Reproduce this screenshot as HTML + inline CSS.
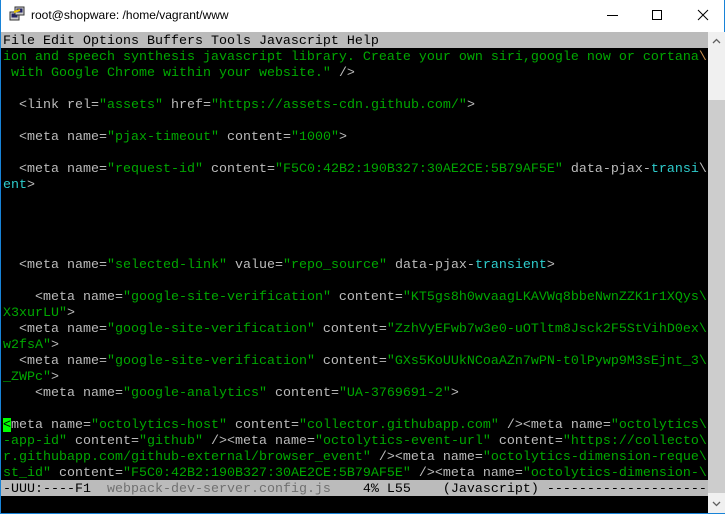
<!DOCTYPE html>
<html><head><meta charset="utf-8"><style>
*{margin:0;padding:0;box-sizing:border-box}
html,body{width:725px;height:514px;overflow:hidden;background:#fff}
#win{position:absolute;left:0;top:0;width:725px;height:514px;border:1px solid #1883d7;border-top:none;background:#fff}
#title{position:absolute;left:0;top:0;width:723px;height:31px;background:#fff;font-family:"Liberation Sans",sans-serif;font-size:12px;color:#000}
#title .t{position:absolute;left:30px;top:8px}
#term{position:absolute;left:0;top:32px;width:707px;height:481px;background:#000;overflow:hidden}
.r{height:16px;line-height:19px;white-space:pre;font-family:"Liberation Mono",monospace;font-size:13.33px;color:#bbb;padding-left:2px;overflow:hidden}
.g{color:#00a800}.c{color:#2ecccc}.k{color:#000}.bg{background:#bbb;color:#000}
.d{color:#707070}
#sb{position:absolute;left:707px;top:32px;width:17px;height:481px;background:#f0f0f0}
#thumb{position:absolute;left:0;top:68px;width:17px;height:393px;background:#cdcdcd}
</style></head><body><div id="win">
<div id="title">
<svg style="position:absolute;left:8px;top:6px" width="16" height="16" viewBox="0 0 16 16"><rect x="1" y="6" width="9" height="8" fill="#ccc" stroke="#333"/><rect x="2.5" y="7.5" width="6" height="4" fill="#226"/><rect x="6" y="1" width="9" height="8" fill="#ccc" stroke="#333"/><rect x="7.5" y="2.5" width="6" height="4" fill="#226"/><path d="M5 6 L11 4" stroke="#e6c200" stroke-width="2"/></svg>
<span class="t">root@shopware: /home/vagrant/www</span>
<svg style="position:absolute;left:600px;top:8px" width="120" height="16"><path d="M6 7.5h11" stroke="#000"/><rect x="51.5" y="2.5" width="9" height="9" fill="none" stroke="#000"/><path d="M97 2l10 10M107 2l-10 10" stroke="#000"/></svg>
</div>
<div id="term">
<div class="r bg">File Edit Options Buffers Tools Javascript Help                                          </div>
<div class="r g">ion and speech synthesis javascript library. Create your own siri,google now or cortana<span style="color:#c89050">\</span></div>
<div class="r g"> with Google Chrome within your website." <span style="color:#bbb">/&gt;</span></div>
<div class="r"> </div>
<div class="r">  &lt;link rel=<span class="g">"assets"</span> href=<span class="g">"https://assets-cdn.github.com/"</span>&gt;</div>
<div class="r"> </div>
<div class="r">  &lt;meta name=<span class="g">"pjax-timeout"</span> content=<span class="g">"1000"</span>&gt;</div>
<div class="r"> </div>
<div class="r">  &lt;meta name=<span class="g">"request-id"</span> content=<span class="g">"F5C0:42B2:190B327:30AE2CE:5B79AF5E"</span> data-pjax-<span class="c">transi</span>\</div>
<div class="r"><span class="c">ent</span>&gt;</div>
<div class="r"> </div><div class="r"> </div><div class="r"> </div><div class="r"> </div>
<div class="r">  &lt;meta name=<span class="g">"selected-link"</span> value=<span class="g">"repo_source"</span> data-pjax-<span class="c">transient</span>&gt;</div>
<div class="r"> </div>
<div class="r">    &lt;meta name=<span class="g">"google-site-verification"</span> content=<span class="g">"KT5gs8h0wvaagLKAVWq8bbeNwnZZK1r1XQys\</span></div>
<div class="r g">X3xurLU"<span style="color:#bbb">&gt;</span></div>
<div class="r">  &lt;meta name=<span class="g">"google-site-verification"</span> content=<span class="g">"ZzhVyEFwb7w3e0-uOTltm8Jsck2F5StVihD0ex\</span></div>
<div class="r g">w2fsA"<span style="color:#bbb">&gt;</span></div>
<div class="r">  &lt;meta name=<span class="g">"google-site-verification"</span> content=<span class="g">"GXs5KoUUkNCoaAZn7wPN-t0lPywp9M3sEjnt_3\</span></div>
<div class="r g">_ZWPc"<span style="color:#bbb">&gt;</span></div>
<div class="r">    &lt;meta name=<span class="g">"google-analytics"</span> content=<span class="g">"UA-3769691-2"</span>&gt;</div>
<div class="r"> </div>
<div class="r"><span style="background:#0f0;color:#000">&lt;</span>meta name=<span class="g">"octolytics-host"</span> content=<span class="g">"collector.githubapp.com"</span> /&gt;&lt;meta name=<span class="g">"octolytics\</span></div>
<div class="r"><span class="g">-app-id"</span> content=<span class="g">"github"</span> /&gt;&lt;meta name=<span class="g">"octolytics-event-url"</span> content=<span class="g">"https://collecto\</span></div>
<div class="r g">r.githubapp.com/github-external/browser_event" <span style="color:#bbb">/&gt;&lt;meta name=</span>"octolytics-dimension-reque\</div>
<div class="r"><span class="g">st_id"</span> content=<span class="g">"F5C0:42B2:190B327:30AE2CE:5B79AF5E"</span> /&gt;&lt;meta name=<span class="g">"octolytics-dimension-\</span></div>
<div class="r bg">-UUU:----F1  <span class="d">webpack-dev-server.config.js</span>    4% L55    (Javascript) -------------------------</div>
</div>
<div id="sb"><div id="thumb"></div>
<svg style="position:absolute;left:4px;top:6px" width="9" height="6"><path d="M1 5l3.5-3.5L8 5" fill="none" stroke="#606060" stroke-width="1.3"/></svg>
<svg style="position:absolute;left:4px;top:469px" width="9" height="6"><path d="M1 1l3.5 3.5L8 1" fill="none" stroke="#606060" stroke-width="1.3"/></svg>
</div>
</div></body></html>
